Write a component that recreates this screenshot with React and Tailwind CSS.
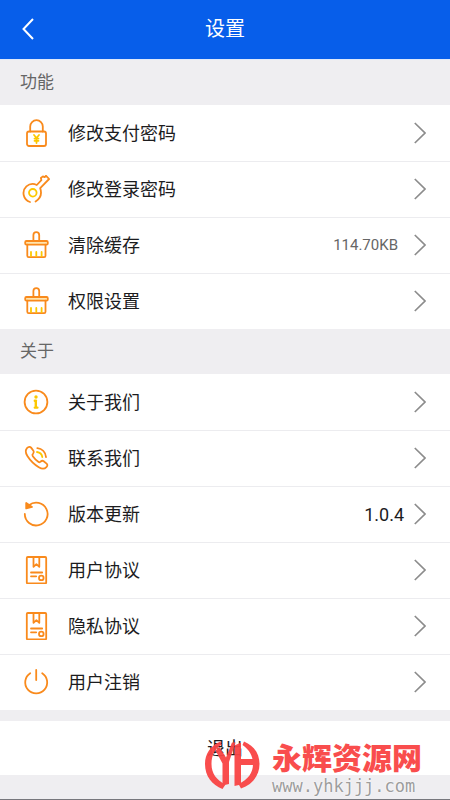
const LockIcon = () => (
  <>
    <rect x="5" y="12.5" width="19" height="14.5" rx="2" />
    <path d="M8.2 12.5V7.5a6.3 6.3 0 0 1 12.6 0v5" />
    <g stroke="#fcc800">
      <path d="M12 16l2.5 3 2.5-3M14.5 19v5M12.5 19.6h4M12.5 21.8h4" />
    </g>
  </>
);

const KeyIcon = () => (
  <>
    <path d="M8 27a9.3 9.3 0 0 1-3.6-15.6c3-2.6 7-3 10.4-1.4l4.6-4.8-.5-2.2 2-1.6 1.6.8 1.6-1.4 3 3.2-8.9 9.1c1.6 4.8.6 10.2-4.6 13.4" />
    <circle cx="10.8" cy="17.8" r="3.8" stroke="#fcc800" />
  </>
);

const BrushIcon = () => (
  <>
    <path d="M11.4 10V4a2.9 2.9 0 0 1 5.8 0v6" />
    <rect x="3.2" y="10" width="22.6" height="3.6" rx="1.2" fill="#ffe4ae" />
    <path d="M5.3 13.6v11.2c0 .8.5 1.4 1.4 1.4h15.4c.9 0 1.4-.6 1.4-1.4V13.6" />
    <path d="M9 21v4M14.3 21v4M19.6 21v4" stroke="#fcc800" />
  </>
);

const InfoIcon = () => (
  <>
    <circle cx="14" cy="14" r="11.4" />
    <circle cx="14" cy="9" r="1.7" fill="#fcc800" stroke="none" />
    <path d="M13.8 13v6.4M12.8 12.8h1.2M12.8 19.6h2.6" stroke="#fcc800" strokeWidth="2.4" />
  </>
);

const PhoneIcon = () => (
  <>
    <path d="M5.2 3.9c1.3-1.3 2.9-1.5 3.9-.3l2.3 3.1c.8 1.1.6 2-.3 2.9-.9.8-1 1.6-.3 2.6 1.6 2.3 3.3 4 5.5 5.6 1 .7 1.7.6 2.5-.3.9-.9 1.9-1 2.9-.2l2.9 2.3c1.1.9 1 2.3-.2 3.5-2 2.1-4.7 1.9-7.6.1-4.7-2.8-8.5-6.6-11.4-11.2-1.9-3-2.3-6-.2-8.1z" />
    <path d="M15.3 4.2c4.7.5 8.2 4 8.7 8.9" />
    <path d="M15 8c2.9.4 4.8 2.2 5.3 5" stroke="#fcc800" />
  </>
);

const RefreshIcon = () => (
  <>
    <path d="M2.8 14a11.4 11.4 0 1 0 4.2-8.8" />
    <path d="M4.2 3v5.4l5.8-1.4z" fill="#f98a1c" />
  </>
);

const DocIcon = () => (
  <>
    <rect x="4.8" y="1" width="19.4" height="26.4" rx="1" />
    <path d="M11.5 1v9.8l2.9-2.6 2.9 2.6V1M9 16.5h11.2M9 20.3h5.2" />
    <circle cx="19.3" cy="21.9" r="2.3" />
  </>
);

const PowerIcon = () => (
  <>
    <path d="M8.2 5.2a11 11 0 1 0 12 0" />
    <path d="M14.2 2v10" />
  </>
);

const featureItems = [
  { label: "修改支付密码", icon: LockIcon },
  { label: "修改登录密码", icon: KeyIcon },
  { label: "清除缓存", icon: BrushIcon, note: "114.70KB" },
  { label: "权限设置", icon: BrushIcon },
];

const aboutItems = [
  { label: "关于我们", icon: InfoIcon },
  { label: "联系我们", icon: PhoneIcon },
  { label: "版本更新", icon: RefreshIcon, version: "1.0.4" },
  { label: "用户协议", icon: DocIcon },
  { label: "隐私协议", icon: DocIcon },
  { label: "用户注销", icon: PowerIcon },
];

const SettingRow = ({ item }) => {
  const Icon = item.icon;
  return (
    <li className="border-t border-[#ececef] first:border-transparent">
      <button
        type="button"
        className="flex h-[55px] w-full items-center pb-px pl-[22px] pr-6 text-left"
      >
        <svg
          viewBox="0 0 28 28"
          className="mr-[18px] h-7 w-7 shrink-0"
          fill="none"
          stroke="#f98a1c"
          strokeWidth="1.8"
          strokeLinecap="round"
          strokeLinejoin="round"
        >
          <Icon />
        </svg>
        <span className="flex-1 text-[18px] text-[#1c1c1e]">{item.label}</span>
        {item.note && (
          <span className="mr-4 text-[15px] text-[#666]">{item.note}</span>
        )}
        {item.version && (
          <span className="mr-[10px] text-[18px] text-[#1c1c1e]">
            {item.version}
          </span>
        )}
        <svg
          viewBox="0 0 12 22"
          className="h-[22px] w-3 shrink-0"
          fill="none"
          stroke="#8c8c8c"
          strokeWidth="1.7"
        >
          <path d="M0.8 1l10.2 10L0.8 21" />
        </svg>
      </button>
    </li>
  );
};

const Section = ({ title, items }) => (
  <section>
    <h2 className="flex h-[45px] items-center bg-[#efeef1] pl-5 text-[17px] text-[#666]">
      {title}
    </h2>
    <ul>
      {items.map((item) => (
        <SettingRow key={item.label} item={item} />
      ))}
    </ul>
  </section>
);

const SiteMark = () => (
  <div className="pointer-events-none absolute right-[28px] top-[19px] flex items-start gap-[11px] opacity-95">
    <svg viewBox="0 0 56 50" className="h-[50px] w-14" fill="#f94444">
      <path d="M15.5 1.5C5 6 0 14 0 24c0 12 7 21 17.5 25l3-4.5C11.5 40 6.5 33.5 6.5 24c0-9 3.5-15 10-19.5z" />
      <path d="M39 1.5C49.5 6 54.500 14 54.500 24c0 12-7.500 20.500-18.500 24.500l-2.500-4.500C43 39.500 48 33 48 24c0-8.500-4-14.500-10.500-19z" />
      <path d="M10.500 10.500l4-3.500 6.500 10.500 6-15h3.500L24 22v22l-6.500 1.500V23.500z" />
      <path d="M29.500 5.500L36 2.500v16.500h13v6H36v19.500l-6.500 1.500z" />
    </svg>
    <div className="pt-[2px]">
      <p className="text-[30px] leading-[34px] font-black text-[#f94444]">
        永辉资源网
      </p>
      <p className="font-['DejaVu_Sans_Mono',monospace] text-[17px] leading-5 text-[#999] [text-shadow:0_0_2px_#fff,0_0_2px_#fff]">
        www.yhkjjj.com
      </p>
    </div>
  </div>
);

const App = () => {
  return (
    <div className="flex min-h-screen flex-col bg-white font-['Roboto','Noto_Sans_CJK_SC',sans-serif]">
      <header className="grid h-15 grid-cols-[1fr_auto_1fr] items-center border-b border-[#dfe9fb] bg-[#075eea] px-[22px] pb-[2px] text-white">
        <button type="button" aria-label="返回" className="w-3">
          <svg
            viewBox="0 0 12 22"
            className="h-[22px] w-3"
            fill="none"
            stroke="currentColor"
            strokeWidth="2"
          >
            <path d="M11 1L1.5 11 11 21" />
          </svg>
        </button>
        <h1 className="text-[20px]">设置</h1>
      </header>

      <main className="flex flex-1 flex-col">
        <Section title="功能" items={featureItems} />
        <Section title="关于" items={aboutItems} />

        <div className="relative flex flex-1 flex-col border-t-[11px] border-[#efeef1]">
          <button type="button" className="h-[54px] w-full text-[18px] text-[#1c1c1e]">
            退出
          </button>
          <div className="min-h-6 flex-1 border-b border-[#77777d] bg-[#efeef1]" />
          <SiteMark />
        </div>
      </main>
    </div>
  );
};

export default App;
